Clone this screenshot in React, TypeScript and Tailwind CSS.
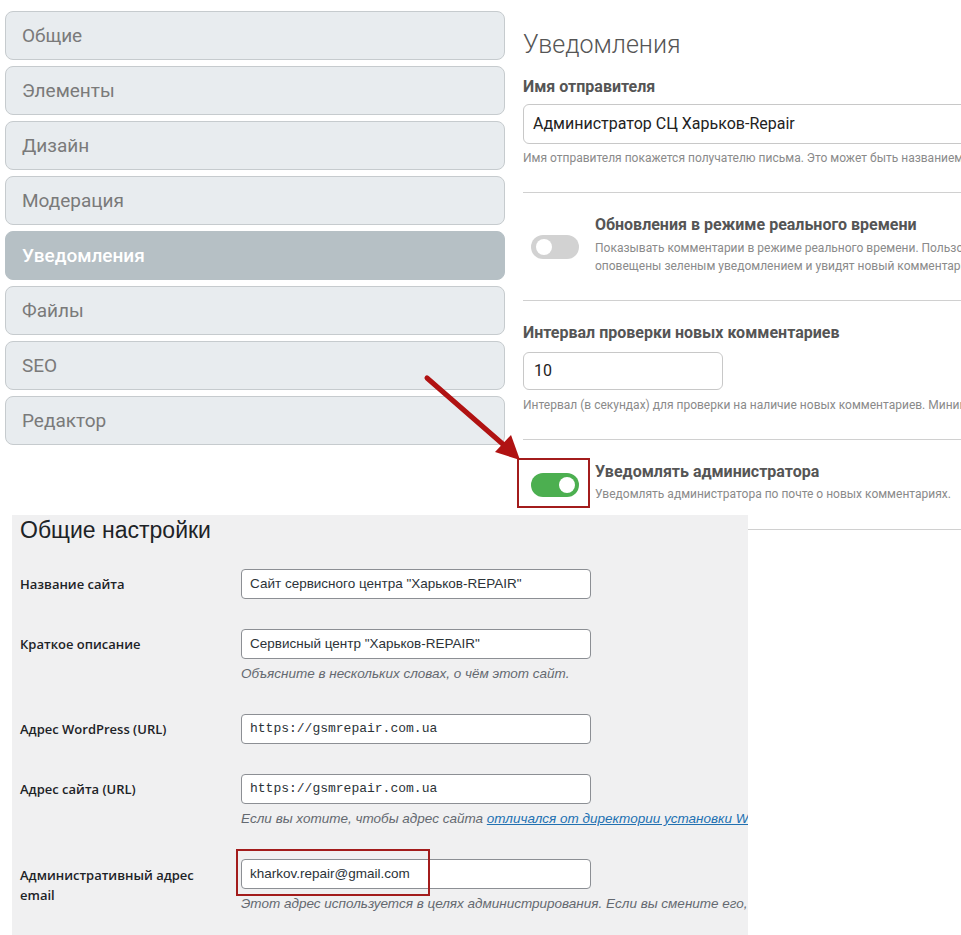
import React from "react";

const menu = ["Общие", "Элементы", "Дизайн", "Модерация", "Уведомления", "Файлы", "SEO", "Редактор"];

function Toggle({ on }: { on: boolean }) {
  return (
    <div
      className={
        "relative w-[48px] h-[24px] rounded-full " + (on ? "bg-[#4caf50]" : "bg-[#d2d2d2]")
      }
    >
      <div
        className={
          "absolute top-[4px] w-[16px] h-[16px] rounded-full bg-white " +
          (on ? "left-[28px]" : "left-[5px]")
        }
      />
    </div>
  );
}

function WpInput({ children, mono }: { children: React.ReactNode; mono?: boolean }) {
  return (
    <div
      className={
        "w-[350px] h-[30px] rounded-[4px] border border-[#8c8f94] bg-white pl-[8px] flex items-center text-[#2c3338] whitespace-nowrap " +
        (mono
          ? "font-['Liberation_Mono',monospace] text-[13px]"
          : "text-[13.5px]")
      }
    >
      {children}
    </div>
  );
}

const labelCls =
  "w-[221px] shrink-0 pt-[5px] text-[13px] leading-[20px] font-semibold font-['Open_Sans',sans-serif] text-[#1d2327]";

export default function App() {
  return (
    <div className="relative w-[961px] h-[935px] overflow-hidden bg-white font-['Roboto',sans-serif]">
      {/* top section */}
      <div className="flex gap-[18px] pl-[5px] h-[530px]">
        <div className="w-[500px] shrink-0 pt-[11px] flex flex-col gap-[6px]">
          {menu.map((m) => {
            const active = m === "Уведомления";
            return (
              <div
                key={m}
                className={
                  "h-[49px] rounded-[8px] flex items-center pl-[16px] pt-[2px] text-[19px] " +
                  (active
                    ? "bg-[#b6c0c5] border border-[#b6c0c5] text-white font-medium"
                    : "bg-[#e8ecef] border border-[#c6cbce] text-[#7a7a7a]")
                }
              >
                {m}
              </div>
            );
          })}
        </div>

        <div className="w-[600px] shrink-0 flex flex-col">
          <div className="mt-[29px] text-[25px] leading-[32px] font-light text-[#555]">Уведомления</div>
          <div className="mt-[16px] text-[16px] leading-[20px] font-bold text-[#555]">Имя отправителя</div>
          <div className="mt-[7px] h-[40px] rounded-[6px] border border-[#c8c8c8] flex items-center pl-[9px] text-[16px] text-[#222]">
            Администратор СЦ Харьков-Repair
          </div>
          <div className="mt-[6px] text-[12px] leading-[16px] text-[#8a8a8a] whitespace-nowrap">
            Имя отправителя покажется получателю письма. Это может быть названием вашего сайта.
          </div>
          <div className="mt-[26px] h-px bg-[#d0d0d0]" />

          <div className="mt-[22px] flex items-center">
            <div className="ml-[8px] mt-[4px] w-[48px] shrink-0">
              <Toggle on={false} />
            </div>
            <div className="ml-[16px]">
              <div className="text-[16px] leading-[20px] font-bold text-[#555] whitespace-nowrap">
                Обновления в режиме реального времени
              </div>
              <div className="mt-[4px] text-[12px] leading-[18px] text-[#8a8a8a] whitespace-nowrap">
                <div>Показывать комментарии в режиме реального времени. Пользователи будут</div>
                <div>оповещены зеленым уведомлением и увидят новый комментарий без перезагрузки.</div>
              </div>
            </div>
          </div>
          <div className="mt-[25px] h-px bg-[#d0d0d0]" />

          <div className="mt-[22px] text-[16px] leading-[20px] font-bold text-[#555]">
            Интервал проверки новых комментариев
          </div>
          <div className="mt-[9px] w-[200px] h-[38px] rounded-[6px] border border-[#c8c8c8] flex items-center pl-[10px] text-[16px] text-[#222]">
            10
          </div>
          <div className="mt-[7px] text-[12px] leading-[16px] text-[#8a8a8a] whitespace-nowrap">
            Интервал (в секундах) для проверки на наличие новых комментариев. Минимум 5 секунд.
          </div>
          <div className="mt-[26px] h-px bg-[#d0d0d0]" />

          <div className="mt-[22px] flex items-center">
            <div className="relative ml-[8px] mt-[4px] w-[48px] shrink-0">
              <Toggle on={true} />
              <div className="absolute left-[-14px] top-[-15px] w-[73px] h-[50px] border-2 border-[#a31c1c]" />
            </div>
            <div className="ml-[16px]">
              <div className="text-[16px] leading-[20px] font-bold text-[#555] whitespace-nowrap">
                Уведомлять администратора
              </div>
              <div className="mt-[3px] text-[12px] leading-[18px] text-[#8a8a8a] whitespace-nowrap">
                Уведомлять администратора по почте о новых комментариях.
              </div>
            </div>
          </div>
          <div className="mt-[26px] h-px bg-[#d0d0d0]" />
        </div>
      </div>

      {/* bottom WordPress panel */}
      <div className="relative -mt-[15px] ml-[12px] w-[736px] h-[430px] bg-[#f0f0f1] pl-[8px] overflow-hidden font-['Liberation_Sans',Arial,sans-serif] text-[#1d2327]">
        <div className="text-[23px] leading-[30px] text-[#1d2327]">Общие настройки</div>

        <div className="mt-[24px] flex">
          <div className={labelCls}>Название сайта</div>
          <WpInput>Сайт сервисного центра "Харьков-REPAIR"</WpInput>
        </div>

        <div className="mt-[30px] flex">
          <div className={labelCls}>Краткое описание</div>
          <div>
            <WpInput>Сервисный центр "Харьков-REPAIR"</WpInput>
            <div className="mt-[5px] text-[13.5px] leading-[20px] italic text-[#646970] whitespace-nowrap">
              Объясните в нескольких словах, о чём этот сайт.
            </div>
          </div>
        </div>

        <div className="mt-[30px] flex">
          <div className={labelCls}>Адрес WordPress (URL)</div>
          <WpInput mono>https://gsmrepair.com.ua</WpInput>
        </div>

        <div className="mt-[30px] flex">
          <div className={labelCls}>Адрес сайта (URL)</div>
          <div>
            <WpInput mono>https://gsmrepair.com.ua</WpInput>
            <div className="mt-[5px] text-[13.5px] leading-[20px] italic text-[#646970] whitespace-nowrap">
              Если вы хотите, чтобы адрес сайта{" "}
              <span className="text-[#2271b1] underline">отличался от директории установки WordPress</span>
              , введите здесь адрес.
            </div>
          </div>
        </div>

        <div className="mt-[30px] flex">
          <div className={labelCls + " pr-[21px] pt-[6px]"}>Административный адрес email</div>
          <div>
            <div className="relative">
              <WpInput>kharkov.repair@gmail.com</WpInput>
              <div className="absolute left-[-5px] top-[-10px] w-[194px] h-[47px] border-2 border-[#a31c1c]" />
            </div>
            <div className="mt-[5px] text-[13.5px] leading-[20px] italic text-[#646970] whitespace-nowrap">
              Этот адрес используется в целях администрирования. Если вы смените его, мы отправим письмо.
            </div>
          </div>
        </div>
      </div>

      {/* arrow overlay */}
      <svg
        className="absolute left-0 top-0 pointer-events-none"
        width="961"
        height="935"
        viewBox="0 0 961 935"
      >
        <path d="M427 378 L505 446" stroke="#b01212" strokeWidth="5" strokeLinecap="round" />
        <path d="M520 460 L495 452 L511 435 Z" fill="#b01212" />
      </svg>
    </div>
  );
}
